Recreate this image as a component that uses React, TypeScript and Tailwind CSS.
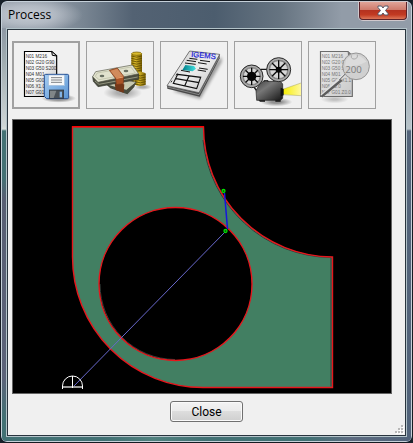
import type { ReactNode } from 'react';

const GCODE = ['N01 M216', 'N02 G20 G90', 'N03 G50 S200', 'N04 M01', 'N05 G00', 'N06 X1.0', 'N07 G01'];
const GCODE_PREVIEW = ['N01 M216', 'N02 G20 G', 'N03 G50 S', 'N04 M01', 'N05 G00 X1.1', 'N06 Z0.0', 'N07 G01 Z0.0'];

function SaveProgramIcon() {
  return (
    <svg viewBox="18 21 192 192" className="block h-full w-full" aria-hidden="true">
      <defs>
        <linearGradient id="sheet" x1="0" y1="0" x2="1" y2="1">
          <stop offset="0" stopColor="#ffffff" />
          <stop offset="0.5" stopColor="#f4f4f4" />
          <stop offset="1" stopColor="#b5b5b5" />
        </linearGradient>
        <linearGradient id="disk" x1="0" y1="0" x2="1" y2="1">
          <stop offset="0" stopColor="#a5cdf3" />
          <stop offset="1" stopColor="#5c95d3" />
        </linearGradient>
        <radialGradient id="diskShadow">
          <stop offset="0.5" stopColor="#000000" stopOpacity="0.35" />
          <stop offset="1" stopColor="#000000" stopOpacity="0" />
        </radialGradient>
      </defs>
      <ellipse cx="152" cy="187" rx="52" ry="13" fill="url(#diskShadow)" />
      <path d="M49.5 46.5H131L146 59V181.5H49.5Z" fill="url(#sheet)" stroke="#000000" strokeWidth="3.5" />
      <path d="M131 46L133 58L147 60Z" fill="#e0e0e0" stroke="#000000" strokeWidth="3" />
      {GCODE.map((line, i) => (
        <text key={line} x="53" y={65 + i * 18} fontFamily="Liberation Sans, sans-serif" fontSize="14" fill="#303030">
          {line}
        </text>
      ))}
      <path d="M113 115H178Q182 115 182 119V184Q182 188 178 188H116L109 181V119Q109 115 113 115Z" fill="url(#disk)" stroke="#264f91" strokeWidth="3" />
      <rect x="121" y="117" width="49" height="32" fill="#f7f8f9" stroke="#7fa5cf" strokeWidth="1.5" />
      <path d="M129 125H162M129 132H162M129 139H162" stroke="#676b70" strokeWidth="2.5" />
      <rect x="124" y="162" width="43" height="25" fill="#4a5157" stroke="#27313d" strokeWidth="2" />
      <path d="M126 164H145L137 186H126Z" fill="#808688" />
      <rect x="155" y="167" width="7" height="17" fill="#81b2e5" />
    </svg>
  );
}

function CostIcon() {
  return (
    <svg viewBox="21 18 198 198" className="block h-full w-full" aria-hidden="true">
      <defs>
        <linearGradient id="coin" x1="0" x2="1">
          <stop offset="0" stopColor="#8f7200" />
          <stop offset="0.35" stopColor="#e0be2c" />
          <stop offset="1" stopColor="#775d00" />
        </linearGradient>
        <radialGradient id="cashShadow">
          <stop offset="0.3" stopColor="#000000" stopOpacity="0.28" />
          <stop offset="1" stopColor="#000000" stopOpacity="0" />
        </radialGradient>
      </defs>
      <ellipse cx="128" cy="170" rx="58" ry="22" fill="url(#cashShadow)" />
      <ellipse cx="188" cy="153" rx="27" ry="9" fill="url(#cashShadow)" />
      <path d="M154 53Q169 44 186 53V143H154Z" fill="url(#coin)" />
      <ellipse cx="170" cy="53" rx="15" ry="5" fill="#d8b92d" stroke="#6d5600" strokeWidth="2" />
      {[60, 67, 74, 81, 88, 95, 102, 109].map((y) => (
        <path key={y} d={`M154 ${y}Q170 ${y + 7} 186 ${y}`} fill="none" stroke="#5e4a00" strokeWidth="2.5" />
      ))}
      <path d="M165 112Q181 103 197 112V146Q181 154 165 146Z" fill="url(#coin)" />
      {[116, 123, 130, 137, 144].map((y) => (
        <path key={y} d={`M165 ${y}Q181 ${y + 7} 197 ${y}`} fill="none" stroke="#5e4a00" strokeWidth="2.5" />
      ))}
      <path d="M79 145L145 133L169 139L139 163L90 153Z" fill="#c7c8b0" stroke="#404238" strokeWidth="2" />
      <path d="M79 145L139 162L168 139L163 153L142 175L91 157Z" fill="#484b3d" />
      <path d="M104 141L133 145L131 170L107 162Z" fill="#733819" />
      <path d="M38 122L40 136L54 152L176 130V114Z" fill="#4b4d40" stroke="#37392f" strokeWidth="2" />
      <path d="M45 135L57 145L173 123" fill="none" stroke="#92947e" strokeWidth="3" />
      <path d="M38 122L47 107L157 87L176 113L54 139Z" fill="#e1e2ce" stroke="#57594a" strokeWidth="2" />
      <path d="M46 121L52 111L153 93L166 111L57 131Z" fill="none" stroke="#b6b9a0" strokeWidth="2" />
      <ellipse cx="66" cy="120" rx="7" ry="4" fill="#697063" />
      <ellipse cx="138" cy="105" rx="7" ry="4" fill="#697063" />
      <path d="M88 103L112 96L131 121L130 143L109 146L107 128Z" fill="#a95427" stroke="#783818" strokeWidth="2" />
      <path d="M91 104L112 98L129 121L108 126Z" fill="#d18b5c" />
      <path d="M109 127L130 123" stroke="#eda470" strokeWidth="3" />
    </svg>
  );
}

function ReportIcon() {
  return (
    <svg viewBox="21 18 198 198" className="block h-full w-full" aria-hidden="true">
      <defs>
        <linearGradient id="paper" x1="0" x2="1" y1="0" y2="1">
          <stop offset="0" stopColor="#cccccc" />
          <stop offset="0.5" stopColor="#ececec" />
          <stop offset="1" stopColor="#c0c0c0" />
        </linearGradient>
        <linearGradient id="swatch" x1="0" x2="1">
          <stop offset="0" stopColor="#007b86" />
          <stop offset="1" stopColor="#45e2e2" />
        </linearGradient>
        <filter id="reportBlur">
          <feGaussianBlur stdDeviation="5" />
        </filter>
      </defs>
      <path d="M57 166L139 189L203 78V62L120 150Z" fill="#000000" opacity="0.35" filter="url(#reportBlur)" />
      <path d="M39 149L107 45L197 55V67L137 182L40 158Z" fill="#484848" />
      <path d="M40 153L135 176L196 62" fill="none" stroke="#a5a5a5" strokeWidth="2" />
      <path d="M39 149L107 45L197 55L135 170Z" fill="url(#paper)" stroke="#565656" strokeWidth="2" />
      <text x="111" y="62" fontFamily="Liberation Sans, sans-serif" fontSize="23" fill="#1717d8" stroke="#1717d8" strokeWidth="0.6" transform="rotate(6 111 62)">
        IGEMS
      </text>
      <path d="M106 67L130 70M98 73L126 77M93 81L125 85M138 73L168 77M132 80L158 84M135 96L161 100M131 102L156 106M81 103L108 108" stroke="#151515" strokeWidth="3" />
      <path d="M94 87L120 90L126 98L116 106L85 102Z" fill="url(#swatch)" />
      <path d="M71 115L140 124L128 158L58 142ZM105 120L92 150M66 128L135 140" fill="none" stroke="#111111" strokeWidth="3.5" />
      <path d="M66 118L70 112M51 139L54 134" stroke="#333333" strokeWidth="3" />
    </svg>
  );
}

function Reel({ cx, cy, r, hub }: { cx: number; cy: number; r: number; hub: number }) {
  return (
    <g transform={`translate(${cx} ${cy})`}>
      <circle r={r} fill="#8c8c8c" stroke="#2c2c2c" strokeWidth="3" />
      <circle r={r - 4} fill="none" stroke="#b4b4b4" strokeWidth="3" />
      <circle r={r - 9} fill="#d6d6d6" stroke="#777777" strokeWidth="2" />
      {[0, 45, 90, 135].map((angle) => (
        <path key={angle} d={`M${-(r - 8)} 0H${r - 8}`} stroke="#080808" strokeWidth="4" transform={`rotate(${angle})`} />
      ))}
      <circle r={hub} fill="#050505" />
    </g>
  );
}

function SimulateIcon() {
  return (
    <svg viewBox="21 18 198 198" className="block h-full w-full" aria-hidden="true">
      <defs>
        <linearGradient id="projector" x1="0" x2="1" y1="0" y2="1">
          <stop offset="0" stopColor="#414141" />
          <stop offset="0.35" stopColor="#777777" />
          <stop offset="1" stopColor="#151515" />
        </linearGradient>
        <linearGradient id="beam" x1="0" x2="1">
          <stop offset="0" stopColor="#f6ee00" />
          <stop offset="1" stopColor="#fff8a0" />
        </linearGradient>
        <radialGradient id="projectorShadow">
          <stop offset="0.3" stopColor="#000000" stopOpacity="0.4" />
          <stop offset="1" stopColor="#000000" stopOpacity="0" />
        </radialGradient>
      </defs>
      <ellipse cx="145" cy="198" rx="48" ry="13" fill="url(#projectorShadow)" />
      <path d="M164 160L219 141V179L164 175Z" fill="url(#beam)" />
      <path d="M164 160L219 141M164 176L219 179" stroke="#a7a56b" strokeWidth="1.5" />
      <path d="M99 100H125M76 151L87 165" stroke="#171717" strokeWidth="4" />
      <path d="M94 145L106 136H157L164 144V187L157 193H86L84 164Z" fill="url(#projector)" stroke="#202020" strokeWidth="2" />
      <path d="M91 193H111V197H96ZM142 193H158V197H142Z" fill="#111111" />
      <path d="M108 138V134H120V138M137 136V133H151V136" fill="#555555" stroke="#202020" strokeWidth="3" />
      <path d="M158 155L167 159V178L158 181Z" fill="#111111" />
      <Reel cx={71} cy={121} r={34} hub={14} />
      <Reel cx={152} cy={101} r={36} hub={9} />
    </svg>
  );
}

function InspectIcon() {
  return (
    <svg viewBox="21 18 198 198" className="block h-full w-full" aria-hidden="true">
      <defs>
        <linearGradient id="graySheet" x1="0" x2="1" y1="0" y2="1">
          <stop offset="0" stopColor="#ededed" />
          <stop offset="1" stopColor="#c9c9c9" />
        </linearGradient>
        <radialGradient id="sheetShadow">
          <stop offset="0.2" stopColor="#000000" stopOpacity="0.2" />
          <stop offset="1" stopColor="#000000" stopOpacity="0" />
        </radialGradient>
      </defs>
      <ellipse cx="98" cy="190" rx="42" ry="12" fill="url(#sheetShadow)" />
      <path d="M55.5 46.5H138L151 59V181.5H55.5Z" fill="url(#graySheet)" stroke="#6c6c6c" strokeWidth="3.5" />
      <path d="M137 46L151 60L138 57Z" fill="#777777" />
      {GCODE_PREVIEW.map((line, i) => (
        <text key={line} x="59" y={65 + i * 18} fontFamily="Liberation Sans, sans-serif" fontSize="14" fill="#777777">
          {line}
        </text>
      ))}
      <path d="M59 180L127 117" stroke="#e0e0e0" strokeWidth="10" />
      <path d="M59 182L119 132" stroke="#5c5c5c" strokeWidth="7" />
      <path d="M112 132L130 114" stroke="#555555" strokeWidth="3" />
      <circle cx="162" cy="91" r="40" fill="#d0d0d0" stroke="#969696" strokeWidth="3" />
      <path d="M132 72Q162 40 193 77Q168 91 129 91Z" fill="#dcdcdc" />
      <text x="130" y="112" fontFamily="Open Sans, sans-serif" fontSize="29" fill="#7c7c7c">
        200
      </text>
      <path d="M148 58V65Q156 74 166 64V56" fill="none" stroke="#aaaaaa" strokeWidth="3" />
    </svg>
  );
}

interface ToolButtonProps {
  label: string;
  selected?: boolean;
  disabled?: boolean;
  children: ReactNode;
}

function ToolButton({ label, selected, disabled, children }: ToolButtonProps) {
  return (
    <button
      type="button"
      aria-label={label}
      disabled={disabled}
      className={`h-[68px] w-[68px] shrink-0 border-[#a0a0a0] bg-[#f0f0f0] ${selected ? 'border-2' : 'border'}`}
    >
      {children}
    </button>
  );
}

function PartDrawing() {
  return (
    <svg viewBox="13 120 378 273" className="block w-full" role="img" aria-label="Part with cutting path">
      <path
        d="M72.5 127H203.5A130 130 0 0 0 332.5 257V387.5H203A130.5 130.5 0 0 1 72.5 257ZM252 284A76.5 76.5 0 1 0 99 284A76.5 76.5 0 1 0 252 284Z"
        fill="#427f62"
        fillRule="evenodd"
      />
      <path d="M203 140A130 130 0 0 0 331 257.5V386.5M100 284A75.5 75.5 0 0 0 175 359.5" fill="none" stroke="#333c38" strokeWidth="1" />
      <path
        d="M72.5 127H203.5A130 130 0 0 0 332.5 257V387.5H203A130.5 130.5 0 0 1 72.5 257Z"
        fill="none"
        stroke="#e6161c"
        strokeWidth="1.4"
      />
      <path d="M72 126.5H204" stroke="#ff0000" />
      <circle cx="175.5" cy="284" r="76.5" fill="none" stroke="#e6161c" strokeWidth="1.4" />
      <path d="M72.5 387.5L225.5 231.5" stroke="#6868cc" strokeWidth="1" />
      <path d="M224.5 193L227.5 229" stroke="#1616dd" strokeWidth="1.5" />
      <g fill="#083c08" stroke="#00e000" strokeWidth="1.3">
        <circle cx="223.5" cy="191" r="1.5" />
        <circle cx="225.5" cy="231" r="1.5" />
      </g>
      <path d="M63 387H83" stroke="#999999" strokeWidth="2" />
      <path d="M62.5 389V386A10 10 0 0 1 82.5 386V389M72.5 376V388" fill="none" stroke="#ffffff" strokeWidth="1" />
    </svg>
  );
}

function SizeGrip() {
  return (
    <svg viewBox="0 0 9 9" className="absolute right-0.5 bottom-0.5 h-[9px] w-[9px]" aria-hidden="true">
      {[[6, 0], [3, 3], [6, 3], [0, 6], [3, 6], [6, 6]].map(([x, y]) => (
        <g key={`${x}-${y}`}>
          <rect x={x + 1} y={y + 1} width="2" height="2" fill="#ffffff" />
          <rect x={x} y={y} width="2" height="2" fill="#b8b8b8" />
        </g>
      ))}
    </svg>
  );
}

export default function App() {
  return (
    <div className="min-h-screen bg-[#17212a]">
      <div className="flex min-h-screen flex-col overflow-hidden rounded-[7px] border border-[#151b22] bg-[#53647a]">
        <div className="flex grow flex-col rounded-md border border-[#c5d0d9] bg-[linear-gradient(90deg,#929ca8_0%,#8e98a4_12%,#788592_20%,#536273_32%,#4c5d6e_52%,#667481_68%,#929ca8_83%,#929ca8_100%)]">
          <header className="flex h-[26px] items-start justify-between bg-[radial-gradient(ellipse_55px_18px_at_26px_13px,#c4cad2_0%,#c4cad2aa_50%,transparent_100%)] pr-1 pl-1.5">
            <h1 className="font-['Open_Sans',sans-serif] text-[12px] leading-[26px] text-black">Process</h1>
            <button
              type="button"
              aria-label="Close window"
              className="flex h-[18px] w-12 items-center justify-center rounded-b-[4px] border border-t-0 border-[#5c2229] bg-[linear-gradient(180deg,#e0a498_0%,#cf7b6c_45%,#b53220_50%,#c23a22_75%,#dc7658_100%)] shadow-[0_0_0_1px_#d0c8cc]"
            >
              <svg viewBox="0 0 12 11" className="h-[11px] w-3" aria-hidden="true">
                <path d="M1 1H4.5L6 3L7.5 1H11V2.5L8.5 5.5L11 8.5V10H7.5L6 8L4.5 10H1V8.5L3.5 5.5L1 2.5Z" fill="#ffffff" stroke="#575869" strokeWidth="1" />
              </svg>
            </button>
          </header>

          <div className="flex grow">
            <div className="w-1 shrink-0 bg-[linear-gradient(180deg,#8e98a4_0px,#9eaaaf_30px,#ced5d6_98px,#d8dedc_101px,#447174_103px,#447174_150px,#585f73_170px,#5c6379_350px,#427174_390px)]" />
            <main className="relative flex grow flex-col border border-[#b3c3c9]">
              <div className="flex grow flex-col border border-[#29343e] bg-[#f0f0f0] px-1 pt-[11px] pb-3">
                <div className="flex gap-1.5">
                  <ToolButton label="Save program" selected>
                    <SaveProgramIcon />
                  </ToolButton>
                  <ToolButton label="Cost">
                    <CostIcon />
                  </ToolButton>
                  <ToolButton label="Report">
                    <ReportIcon />
                  </ToolButton>
                  <ToolButton label="Simulate">
                    <SimulateIcon />
                  </ToolButton>
                  <ToolButton label="Inspect program" disabled>
                    <InspectIcon />
                  </ToolButton>
                </div>
                <div className="mt-2.5 mr-[9px] border border-[#646464] bg-black">
                  <PartDrawing />
                </div>
                <div className="mt-[7px] flex justify-center">
                  <button
                    type="button"
                    className="h-[21px] w-[73px] rounded-[3px] border border-[#707070] bg-[linear-gradient(180deg,#f3f3f3_0%,#ebebeb_48%,#dddddd_50%,#cfcfcf_100%)] font-[Roboto,sans-serif] text-[12px] leading-[18px] text-black shadow-[inset_0_0_0_1px_#fafafa]"
                  >
                    Close
                  </button>
                </div>
              </div>
              <SizeGrip />
            </main>
            <div className="w-1 shrink-0 bg-[linear-gradient(180deg,#929ca8_0px,#a7b2bb_60px,#b7c2c8_101px,#54647a_103px,#51637a_100%)]" />
          </div>
          <div className="h-1 rounded-b-[4px] bg-[linear-gradient(90deg,#427174_0%,#427174_25%,#51817f_37%,#427174_50%,#427174_75%,#5d6b80_85%,#51637a_100%)]" />
        </div>
      </div>
    </div>
  );
}
